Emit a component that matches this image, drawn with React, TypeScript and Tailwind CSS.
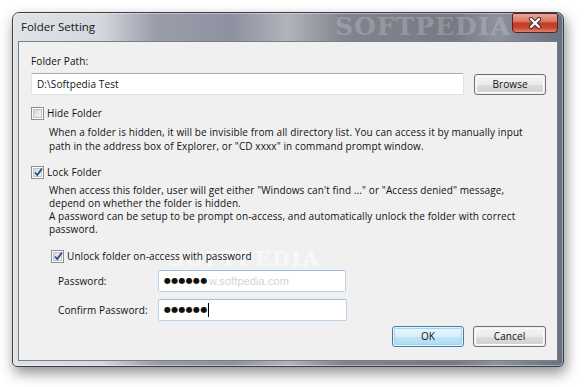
function Check({ checked, label, className = "" }: { checked?: boolean; label: string; className?: string }) {
  return (
    <div className={"flex items-center gap-[3px] h-[13px] " + className}>
      <div className="w-[13px] h-[13px] border border-[#8e8f8f] bg-white p-[1px] shrink-0">
        <div className="w-full h-full border border-[#c0c3c8] bg-[linear-gradient(135deg,#d3d6da,#f7f7f7)] relative">
          {checked && (
            <svg className="absolute left-[-1px] top-[-2px]" width="11" height="11" viewBox="0 0 11 11">
              <path d="M2 5.5 L4.3 8 L9 1.5" fill="none" stroke="#2b4b8c" strokeWidth="1.8" />
            </svg>
          )}
        </div>
      </div>
      <span className="leading-[13px]">{label}</span>
    </div>
  )
}

function Button({ label, primary, className = "" }: { label: string; primary?: boolean; className?: string }) {
  return (
    <div
      className={
        "h-[21px] rounded-[3px] border flex items-center justify-center p-[1px] " +
        (primary ? "border-[#3c7fb1] " : "border-[#707070] ") +
        className
      }
    >
      <div
        className={
          "w-full h-full rounded-[2px] flex items-center justify-center " +
          (primary
            ? "border border-[#9fd5f2] bg-[linear-gradient(#e8f5fc_0%,#d9eefa_50%,#c3e4f6_51%,#b2dcf2_100%)]"
            : "border border-[#fbfbfb] bg-[linear-gradient(#f3f3f3_0%,#ebebeb_50%,#dedede_51%,#d2d2d2_100%)]")
        }
      >
        {label}
      </div>
    </div>
  )
}

export default function App() {
  return (
    <div className="w-[585px] h-[387px] bg-white overflow-hidden pl-[12px] pt-[12px] font-['Open_Sans',sans-serif] text-[10px] tracking-[0.1px] text-[#111]">
      <div className="relative w-[552px] h-[355px] rounded-t-[7px] rounded-b-[5px] border border-[#3a3e46] shadow-[2px_6px_14px_rgba(0,0,0,0.45)] bg-[linear-gradient(90deg,#dfe2e6_0%,#d4d7dc_16%,#9a9daa_26%,#8e92a0_40%,#b2b4bb_50%,#82858f_60%,#777a84_80%,#8e929e_88%,#66707f_100%)] flex flex-col px-[5px] pb-[5px]">
        <div className="absolute inset-0 rounded-t-[6px] rounded-b-[4px] border border-white/40 pointer-events-none" />
        <div className="absolute left-[322px] top-[1px] text-[25px] font-bold tracking-[1px] text-white/20 font-['DejaVu_Serif',serif] leading-[26px]">
          SOFTPEDIA
        </div>
        <div className="absolute left-[499px] top-[0px] w-[46px] h-[20px] rounded-b-[4px] rounded-t-[2px] border border-[#5a2219] bg-[linear-gradient(#eaa797_0%,#d87964_40%,#c33b24_52%,#c84630_75%,#e08468_100%)] flex items-center justify-center">
          <svg width="14" height="12" viewBox="0 0 14 12">
            <path d="M3 2 L11 10 M11 2 L3 10" stroke="#3d2a2a" strokeWidth="4.2" strokeLinecap="round" />
            <path d="M3 2 L11 10 M11 2 L3 10" stroke="#ffffff" strokeWidth="2.4" strokeLinecap="round" />
          </svg>
        </div>
        <div className="h-[28px] flex items-center pl-[3px] text-[11.5px] tracking-normal text-[#151515] relative">Folder Setting</div>
        <div className="flex-1 border border-[#7b7e83] bg-[#f0f0f0] pl-[12px] pr-[11px] relative">
          <div className="absolute left-[150px] top-[202px] text-[20px] font-bold text-white/60 tracking-[2px] font-['DejaVu_Serif',serif]">
            SOFTPEDIA<sup className="text-[6px]">™</sup>
          </div>
          <div className="relative">
            <div className="mt-[13px] leading-[13px]">Folder Path:</div>
            <div className="mt-[5px] flex items-center gap-[10px]">
              <div className="w-[434px] h-[22px] bg-white border border-[#dfe3e8] border-t-[#abadb3] rounded-[2px] flex items-center pl-[5px]">
                D:\Softpedia Test
              </div>
              <Button label="Browse" className="w-[72px] h-[20px]" />
            </div>
            <Check label="Hide Folder" className="mt-[12px]" />
            <p className="mt-[5px] ml-[18px] leading-[14px] whitespace-nowrap">
              When a folder is hidden, it will be invisible from all directory list. You can access it by manually input
              <br />
              path in the address box of Explorer, or "CD xxxx" in command prompt window.
            </p>
            <Check checked label="Lock Folder" className="mt-[13px]" />
            <p className="mt-[5px] ml-[18px] leading-[13px] whitespace-nowrap">
              When access this folder, user will get either "Windows can't find ..." or "Access denied" message,
              <br />
              depend on whether the folder is hidden.
              <br />
              A password can be setup to be prompt on-access, and automatically unlock the folder with correct
              <br />
              password.
            </p>
            <Check checked label="Unlock folder on-access with password" className="mt-[14px] ml-[20px]" />
            <div className="mt-[7px] flex items-center">
              <div className="w-[100px] pl-[27px] shrink-0 box-content">Password:</div>
              <div className="w-[188px] h-[22px] bg-white border border-[#b7d3ec] border-t-[#9dbcdc] rounded-[2px] flex items-center pl-[5px] relative">
                <span className="font-['DejaVu_Sans',sans-serif] text-[8px] tracking-[0.3px]">●●●●●●</span>
                <span className="ml-[1px] text-[11px] text-[#d4d4d4] font-['Liberation_Sans',sans-serif]">w.softpedia.com</span>
              </div>
            </div>
            <div className="mt-[7px] flex items-center">
              <div className="w-[100px] pl-[27px] shrink-0 box-content">Confirm Password:</div>
              <div className="w-[189px] h-[22px] bg-white border border-[#b7d3ec] border-t-[#9dbcdc] rounded-[2px] flex items-center pl-[5px]">
                <span className="font-['DejaVu_Sans',sans-serif] text-[8px] tracking-[0.3px]">●●●●●●</span>
                <span className="w-[1px] h-[14px] bg-black" />
              </div>
            </div>
            <div className="mt-[5px] flex justify-end gap-[9px]">
              <Button label="OK" primary className="w-[72px]" />
              <Button label="Cancel" className="w-[73px]" />
            </div>
          </div>
        </div>
      </div>
    </div>
  )
}
